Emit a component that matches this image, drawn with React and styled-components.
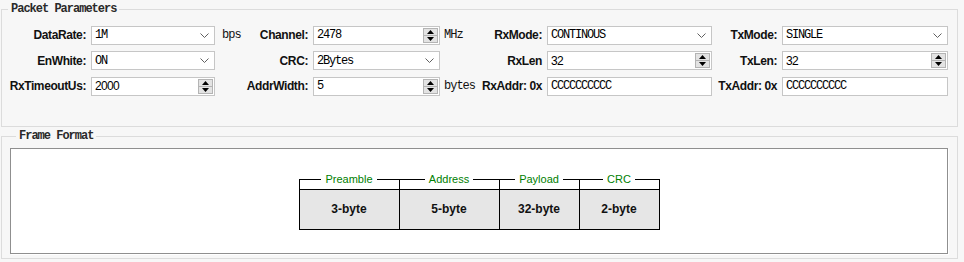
import React from "react";
import styled, { createGlobalStyle } from "styled-components";

const Global = createGlobalStyle`
  html, body { margin: 0; padding: 0; background: #f7f7f7; }
  body { width: 964px; height: 262px; overflow: hidden; font-family: "Liberation Sans", Arial, sans-serif; }
`;

const Page = styled.div`
  display: flex;
  flex-direction: column;
  padding: 1px 0 0 1px;
`;

const Group = styled.fieldset`
  box-sizing: border-box;
  width: 957px;
  margin: ${(p) => p.$mt || 0}px 0 0 0;
  padding: ${(p) => p.$pad};
  border: 1px solid #dcdcdc;
  min-width: 0;
`;

const Title = styled.legend`
  margin-left: 6px;
  padding: 0 3px;
  font-family: "Liberation Mono", "DejaVu Sans Mono", monospace;
  font-weight: bold;
  font-size: 12px;
  letter-spacing: -1px;
  line-height: 16px;
  color: #2a2a2a;
`;

const Grid = styled.div`
  display: grid;
  grid-template-columns: 89px 124px 30px 68px 127px 38px 69px 165px 70px 166px;
  grid-auto-rows: 20px;
  row-gap: 5.5px;
  align-items: center;
`;

const Label = styled.div`
  text-align: right;
  padding-right: 5px;
  font-weight: bold;
  font-size: 12px;
  letter-spacing: -0.4px;
  color: #111;
  white-space: nowrap;
`;

const Unit = styled.div`
  padding-left: ${(p) => p.$pl}px;
  font-family: "Liberation Mono", "DejaVu Sans Mono", monospace;
  font-size: 12px;
  letter-spacing: -1px;
  color: #111;
  white-space: nowrap;
`;

const Box = styled.div`
  box-sizing: border-box;
  height: 19px;
  display: flex;
  align-items: center;
  background: #fff;
  border: 1px solid #c6c6c6;
  padding-left: 3px;
  font-family: ${(p) =>
    p.$sans
      ? `"Liberation Sans", Arial, sans-serif`
      : `"Liberation Mono", "DejaVu Sans Mono", monospace`};
  font-size: 12px;
  letter-spacing: ${(p) => (p.$sans ? "-0.7px" : "-1.2px")};
  color: #000;
  white-space: nowrap;
`;

const Value = styled.span`
  flex: 1;
  overflow: hidden;
`;

const Chevron = styled.svg`
  width: 9px;
  height: 5px;
  margin-right: 5px;
  flex: none;
`;

const SpinCol = styled.div`
  display: flex;
  flex-direction: column;
  align-self: stretch;
  margin: 0 1px 0 0;
  padding: 1px 0;
`;

const SpinBtn = styled.div`
  box-sizing: border-box;
  width: 15px;
  flex: 1;
  display: flex;
  align-items: center;
  justify-content: center;
  background: #e3e3e3;
  border: 1px solid #b4b4b4;
  & + & { border-top: none; }
`;

const Tri = ({ up }) => (
  <svg width="7" height="4" viewBox="0 0 7 4">
    <polygon points={up ? "3.5,0 7,4 0,4" : "0,0 7,0 3.5,4"} fill="#000" />
  </svg>
);

const Combo = ({ v }) => (
  <Box>
    <Value>{v}</Value>
    <Chevron viewBox="0 0 9 5">
      <polyline points="0.5,0.5 4.5,4.5 8.5,0.5" fill="none" stroke="#606060" strokeWidth="1" />
    </Chevron>
  </Box>
);

const Spin = ({ v, sans }) => (
  <Box $sans={sans}>
    <Value>{v}</Value>
    <SpinCol>
      <SpinBtn><Tri up /></SpinBtn>
      <SpinBtn><Tri /></SpinBtn>
    </SpinCol>
  </Box>
);

const Text = ({ v }) => (
  <Box>
    <Value>{v}</Value>
  </Box>
);

const Panel = styled.div`
  box-sizing: border-box;
  width: 938px;
  height: 106px;
  background: #fff;
  border: 1px solid #8f8f8f;
  box-shadow: 1px 1px 0 #ffffff;
  display: flex;
  align-items: center;
  justify-content: center;
  padding-top: 6px;
`;

const Table = styled.div`
  display: flex;
  flex-direction: column;
`;

const HeadRow = styled.div`
  display: flex;
  height: 10px;
  border-right: 1px solid #000;
`;

const HeadCell = styled.div`
  width: ${(p) => p.$w}px;
  display: flex;
  align-items: flex-start;
  border-left: 1px solid #000;
  box-sizing: border-box;
`;

const HeadLine = styled.div`
  flex: 1;
  border-top: 1px solid #000;
`;

const HeadText = styled.div`
  margin-top: -7px;
  padding: 0 4px;
  font-size: 11px;
  line-height: 14px;
  color: #008000;
  white-space: nowrap;
`;

const BodyRow = styled.div`
  display: flex;
  border-top: 1px solid #000;
  border-bottom: 1px solid #000;
  border-right: 1px solid #000;
`;

const BodyCell = styled.div`
  box-sizing: border-box;
  width: ${(p) => p.$w}px;
  height: 39px;
  display: flex;
  align-items: center;
  justify-content: center;
  border-left: 1px solid #000;
  background: #e6e6e6;
  font-weight: bold;
  font-size: 12px;
  color: #111;
`;

const frame = [
  { h: "Preamble", b: "3-byte", w: 100 },
  { h: "Address", b: "5-byte", w: 100 },
  { h: "Payload", b: "32-byte", w: 80 },
  { h: "CRC", b: "2-byte", w: 80 },
];

export default function App() {
  return (
    <>
      <Global />
      <Page>
        <Group $pad="8px 0 30px 0">
          <Title>Packet Parameters</Title>
          <Grid>
            <Label>DataRate:</Label>
            <Combo v="1M" />
            <Unit $pl={7}>bps</Unit>
            <Label>Channel:</Label>
            <Spin v="2478" />
            <Unit $pl={4}>MHz</Unit>
            <Label>RxMode:</Label>
            <Combo v="CONTINOUS" />
            <Label>TxMode:</Label>
            <Combo v="SINGLE" />

            <Label>EnWhite:</Label>
            <Combo v="ON" />
            <span />
            <Label>CRC:</Label>
            <Combo v="2Bytes" />
            <span />
            <Label>RxLen</Label>
            <Spin v="32" sans />
            <Label>TxLen:</Label>
            <Spin v="32" sans />

            <Label>RxTimeoutUs:</Label>
            <Spin v="2000" sans />
            <span />
            <Label>AddrWidth:</Label>
            <Spin v="5" />
            <Unit $pl={4}>bytes</Unit>
            <Label>RxAddr: 0x</Label>
            <Text v="CCCCCCCCCC" />
            <Label>TxAddr: 0x</Label>
            <Text v="CCCCCCCCCC" />
          </Grid>
        </Group>
        <Group $mt={1} $pad="4px 9px 4px 8px">
          <Title>Frame Format</Title>
          <Panel>
            <Table>
              <HeadRow>
                {frame.map((f) => (
                  <HeadCell key={f.h} $w={f.w}>
                    <HeadLine />
                    <HeadText>{f.h}</HeadText>
                    <HeadLine />
                  </HeadCell>
                ))}
              </HeadRow>
              <BodyRow>
                {frame.map((f) => (
                  <BodyCell key={f.h} $w={f.w}>{f.b}</BodyCell>
                ))}
              </BodyRow>
            </Table>
          </Panel>
        </Group>
      </Page>
    </>
  );
}
